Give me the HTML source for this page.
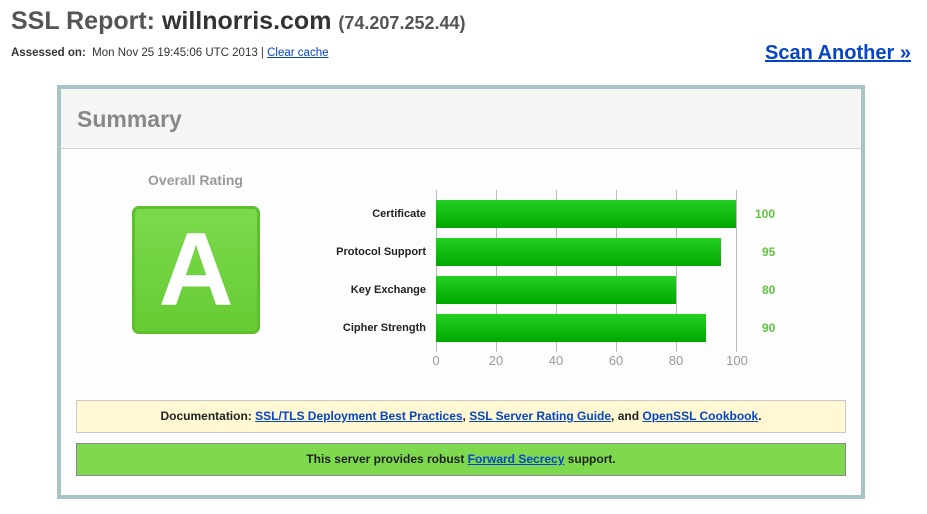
<!DOCTYPE html>
<html><head><meta charset="utf-8"><style>
*{margin:0;padding:0;box-sizing:border-box}
body{width:927px;height:514px;background:#fff;font-family:"Liberation Sans",Arial,sans-serif;position:relative;overflow:hidden}
.a{position:absolute}
a{color:#0645c8;text-decoration:underline}
.lbl{position:absolute;right:501px;font-size:11px;font-weight:bold;color:#222;text-align:right;white-space:nowrap}
.bar{position:absolute;left:436px;height:28px;background:linear-gradient(#24d024,#00a800)}
.num{position:absolute;left:755px;font-size:12px;font-weight:bold;color:#5cc53c}
.grid{position:absolute;top:190px;width:1px;height:162px;background:#bbb}
.ax{position:absolute;top:353px;font-size:13px;color:#999;width:40px;text-align:center}
</style></head><body>
<div class="a" style="left:11px;top:7px;font-size:25px;font-weight:bold;color:#555;white-space:nowrap">SSL Report: <span style="color:#333">willnorris.com</span> <span style="font-size:18px;color:#555">(74.207.252.44)</span></div>
<div class="a" style="left:11px;top:47px;font-size:11.5px;color:#333;white-space:nowrap"><b>Assessed on:</b>&nbsp; Mon Nov 25 19:45:06 UTC 2013 | <a>Clear cache</a></div>
<div class="a" style="left:765px;top:42px;font-size:20px;font-weight:bold;white-space:nowrap"><a>Scan Another »</a></div>

<div class="a" style="left:57px;top:85px;width:808px;height:414px;border:4px solid #a8c4c6;background:#fdfdfd"></div>
<div class="a" style="left:61px;top:89px;width:800px;height:60px;background:#f5f5f5;border-bottom:1px solid #c9d6d7"></div>
<div class="a" style="left:77px;top:106px;font-size:23px;font-weight:bold;color:#888">Summary</div>

<div class="a" style="left:132px;top:172px;width:127px;text-align:center;font-size:14px;font-weight:bold;color:#999">Overall Rating</div>
<div class="a" style="left:132px;top:206px;width:128px;height:128px;border-radius:7px;background:linear-gradient(#7cd94e,#66cc33);border:3px solid #5dbf2c;color:#fff;font-size:104px;font-weight:bold;text-align:center;line-height:122px">A</div>

<div class="grid" style="left:436px"></div>
<div class="grid" style="left:496px"></div>
<div class="grid" style="left:556px"></div>
<div class="grid" style="left:616px"></div>
<div class="grid" style="left:676px"></div>
<div class="grid" style="left:736px"></div>

<div class="bar" style="top:200px;width:300px"></div>
<div class="bar" style="top:238px;width:285px"></div>
<div class="bar" style="top:276px;width:240px"></div>
<div class="bar" style="top:314px;width:270px"></div>

<div class="lbl" style="top:208px">Certificate</div>
<div class="lbl" style="top:246px">Protocol Support</div>
<div class="lbl" style="top:284px">Key Exchange</div>
<div class="lbl" style="top:322px">Cipher Strength</div>

<div class="num" style="top:207px">100</div>
<div class="num" style="top:245px;left:762px">95</div>
<div class="num" style="top:283px;left:762px">80</div>
<div class="num" style="top:321px;left:762px">90</div>

<div class="ax" style="left:416px">0</div>
<div class="ax" style="left:476px">20</div>
<div class="ax" style="left:536px">40</div>
<div class="ax" style="left:596px">60</div>
<div class="ax" style="left:656px">80</div>
<div class="ax" style="left:717px">100</div>

<div class="a" style="left:76px;top:400px;width:770px;height:33px;background:#fff8d2;border:1px solid #c8c8c8;font-size:12px;font-weight:bold;color:#222;text-align:center;line-height:31px;white-space:nowrap">Documentation: <a>SSL/TLS Deployment Best Practices</a>, <a>SSL Server Rating Guide</a>, and <a>OpenSSL Cookbook</a>.</div>
<div class="a" style="left:76px;top:443px;width:770px;height:33px;background:#7ed94e;border:1px solid #888;font-size:12px;font-weight:bold;color:#222;text-align:center;line-height:31px;white-space:nowrap">This server provides robust <a>Forward Secrecy</a> support.</div>
</body></html>
